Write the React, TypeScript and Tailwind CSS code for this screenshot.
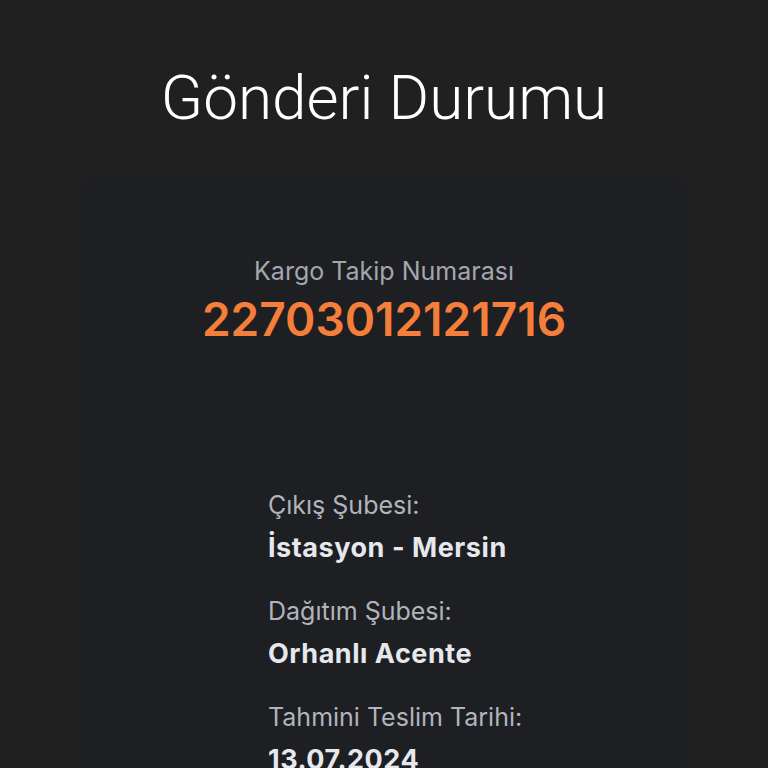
export default function App() {
  const details = [
    { label: 'Çıkış Şubesi:', value: 'İstasyon - Mersin' },
    { label: 'Dağıtım Şubesi:', value: 'Orhanlı Acente' },
    { label: 'Tahmini Teslim Tarihi:', value: '13.07.2024' },
  ];

  return (
    <div className="min-h-screen h-[768px] overflow-hidden bg-[#202020] font-['Inter',sans-serif]">
      <h1 className="pt-[64px] text-center text-[62px] leading-[68px] font-light text-white font-['Roboto',sans-serif]">
        Gönderi Durumu
      </h1>

      <div className="mx-[80px] mt-[45px] h-[700px] rounded-t-xl bg-[#1e1f22]">
        <div className="pt-[78px] flex flex-col items-center">
          <p className="text-[25px] leading-[32px] text-[#a3a6ae]">Kargo Takip Numarası</p>
          <p className="mt-[6px] text-[46px] leading-[52px] font-semibold text-[#f57f3a]">22703012121716</p>
        </div>

        <div className="pl-[188px] pt-[144px] flex flex-col">
          {details.map((d) => (
            <div key={d.label} className="mb-[30px]">
              <p className="text-[25px] leading-[32px] text-[#b1b4bb]">{d.label}</p>
              <p className="mt-[10px] text-[27px] leading-[34px] font-bold tracking-[0.02em] text-[#e6e8ee]">{d.value}</p>
            </div>
          ))}
        </div>
      </div>
    </div>
  );
}
